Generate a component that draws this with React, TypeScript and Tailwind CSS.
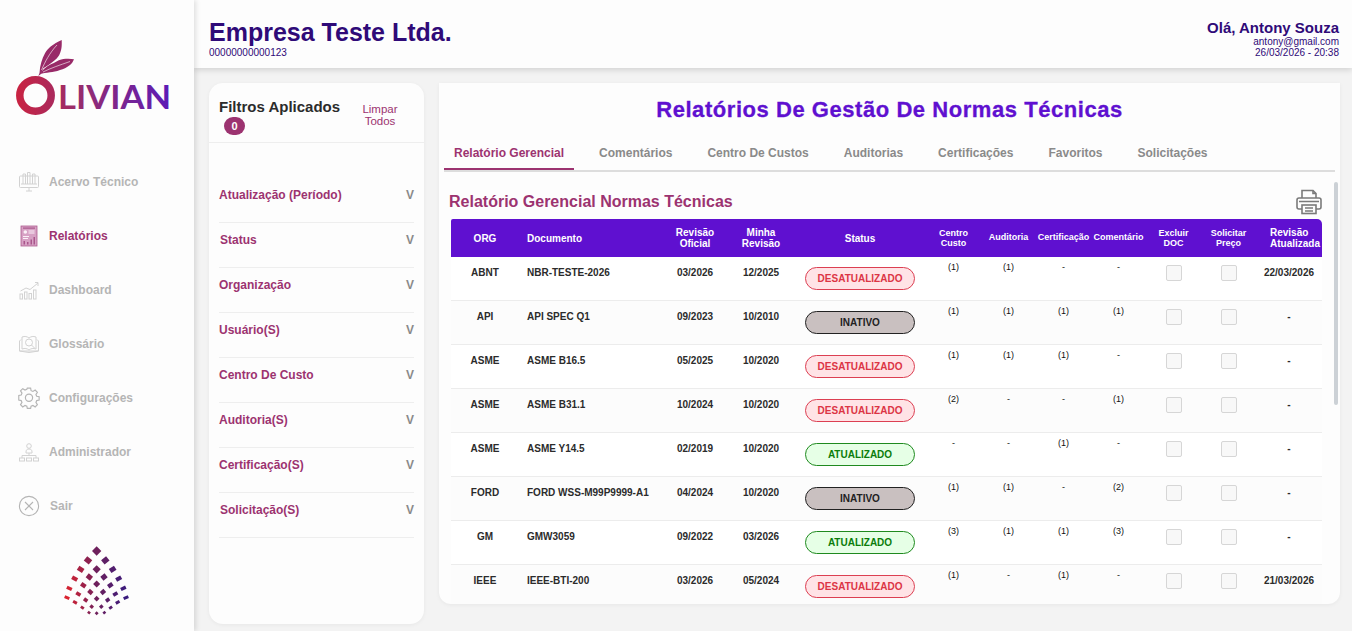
import React from 'react';

type Status = 'des' | 'ina' | 'atu';

interface Row {
  org: string;
  doc: string;
  oficial: string;
  minha: string;
  status: Status;
  centro: string;
  auditoria: string;
  cert: string;
  comentario: string;
  atualizada: string;
}

const rows: Row[] = [
  { org: 'ABNT', doc: 'NBR-TESTE-2026', oficial: '03/2026', minha: '12/2025', status: 'des', centro: '(1)', auditoria: '(1)', cert: '-', comentario: '-', atualizada: '22/03/2026' },
  { org: 'API', doc: 'API SPEC Q1', oficial: '09/2023', minha: '10/2010', status: 'ina', centro: '(1)', auditoria: '(1)', cert: '(1)', comentario: '(1)', atualizada: '-' },
  { org: 'ASME', doc: 'ASME B16.5', oficial: '05/2025', minha: '10/2020', status: 'des', centro: '(1)', auditoria: '(1)', cert: '(1)', comentario: '-', atualizada: '-' },
  { org: 'ASME', doc: 'ASME B31.1', oficial: '10/2024', minha: '10/2020', status: 'des', centro: '(2)', auditoria: '-', cert: '-', comentario: '(1)', atualizada: '-' },
  { org: 'ASME', doc: 'ASME Y14.5', oficial: '02/2019', minha: '10/2020', status: 'atu', centro: '-', auditoria: '-', cert: '(1)', comentario: '-', atualizada: '-' },
  { org: 'FORD', doc: 'FORD WSS-M99P9999-A1', oficial: '04/2024', minha: '10/2020', status: 'ina', centro: '(1)', auditoria: '(1)', cert: '-', comentario: '(2)', atualizada: '-' },
  { org: 'GM', doc: 'GMW3059', oficial: '09/2022', minha: '03/2026', status: 'atu', centro: '(3)', auditoria: '(1)', cert: '(1)', comentario: '(3)', atualizada: '-' },
  { org: 'IEEE', doc: 'IEEE-BTI-200', oficial: '03/2026', minha: '05/2024', status: 'des', centro: '(1)', auditoria: '-', cert: '(1)', comentario: '-', atualizada: '21/03/2026' },
];

const filters = ['Atualização (Período)', 'Status', 'Organização', 'Usuário(S)', 'Centro De Custo', 'Auditoria(S)', 'Certificação(S)', 'Solicitação(S)'];
const tabs = ['Relatório Gerencial', 'Comentários', 'Centro De Custos', 'Auditorias', 'Certificações', 'Favoritos', 'Solicitações'];

const gridCols = 'grid grid-cols-[68px_143px_66px_66px_132px_55px_55px_55px_55px_55px_55px_66px]';

const Logo = () => (
  <svg width="160" height="82" viewBox="0 0 160 82" className="block">
    <defs>
      <linearGradient id="logoGrad" gradientUnits="userSpaceOnUse" x1="0" y1="0" x2="158" y2="0">
        <stop offset="0" stopColor="#cb2340" />
        <stop offset="0.4" stopColor="#982d6c" />
        <stop offset="1" stopColor="#5a1bb8" />
      </linearGradient>
    </defs>
    <circle cx="21.500" cy="57.500" r="15.700" fill="none" stroke="url(#logoGrad)" strokeWidth="7.500" />
    <path d="M24.300 38 25.500 35C26 27 28 21 31 15.300 33.500 10.500 39 6 47.700 2 48 9 47.500 11.500 46 15.300 45 18 43.500 20 41 22 37.500 25 33 28 29.300 30.300L27 36Z" fill="#982a68" />
    <path d="M26 36C30 30 34 27.500 39.300 25.300 43 23 47 21.200 49.300 21 53 20.500 57 20.500 60 21.300 59 24 57.500 25.800 56 27 52.500 29.800 49.500 31 46 32 42.500 33.500 39 34 36 34.300 32 34.800 29 35.500 26 36Z" fill="#982a68" />
    <path d="M27.500 32C31 24 35.500 15 43 7" stroke="#fdfdfd" strokeWidth="0.600" fill="none" />
    <path d="M29 34C37 30 46 27 56 23.500" stroke="#fdfdfd" strokeWidth="0.600" fill="none" />
    <text x="44" y="71.300" fill="url(#logoGrad)" fontFamily="Lato, sans-serif" fontWeight="700" fontSize="32" textLength="113" lengthAdjust="spacingAndGlyphs">LIVIAN</text>
  </svg>
);

// each row of the mark, x/y read off the reference at 3x, s is the side of the little square
const markRows: { y: number[]; x: number[]; s: number }[] = [
  { x: [290], y: [573], s: 6.6 },
  { x: [264, 316], y: [601, 601], s: 6.2 },
  { x: [242, 290, 338], y: [628, 628, 628], s: 5.8 },
  { x: [224, 268, 312, 356], y: [656, 651, 651, 656], s: 5.4 },
  { x: [208, 250, 290, 331, 370], y: [685, 676, 672, 676, 685], s: 5 },
  { x: [201, 235, 271, 309, 346, 378], y: [713, 702, 696, 696, 702, 713], s: 4.6 },
  { x: [225, 257, 290, 323, 353], y: [727, 720, 716, 720, 727], s: 4 },
  { x: [247, 275, 304, 332], y: [743, 740, 740, 743], s: 3.4 },
  { x: [267, 290, 313], y: [758, 760, 758], s: 2.8 },
];

const markColor = (x: number) => {
  const t = (x - 201) / 177;
  const a = t < 0.5 ? [218, 35, 48] : [110, 32, 92];
  const b = t < 0.5 ? [110, 32, 92] : [58, 27, 125];
  const k = t < 0.5 ? t * 2 : (t - 0.5) * 2;
  const c = a.map((v, i) => Math.round(v + (b[i] - v) * k));
  return `rgb(${c[0]},${c[1]},${c[2]})`;
};

const DiamondMark = () => (
  <svg width="66" height="72" viewBox="0 0 66 72" className="block">
    {markRows.flatMap((row, r) =>
      row.x.map((zx, i) => {
        const cx = zx / 3 - 64;
        const cy = row.y[i] / 3 - 185;
        const t = (zx - 290) / 90;
        const abs = Math.abs(t);
        const angle = t < 0 ? 45 - abs * 22 : 135 + abs * 22;
        const w = row.s * (1 + abs * 0.1);
        const h = row.s * (1 - abs * 0.35);
        return (
          <rect
            key={`${r}-${i}`}
            x={cx - w / 2}
            y={cy - h / 2}
            width={w}
            height={h}
            fill={markColor(zx)}
            transform={`rotate(${angle} ${cx} ${cy})`}
          />
        );
      })
    )}
  </svg>
);

const iconProps = { width: 22, height: 22, viewBox: '0 0 22 22', fill: 'none', strokeWidth: 1 };

const AcervoIcon = () => (
  <svg {...iconProps} stroke="#d2d2d2">
    <rect x="1.500" y="5" width="19" height="11.500" rx="1" />
    <path d="M5 13V3h2.500v10M9.500 13V1.500H12V13M14.500 13V3H17v10M3 13h16M8 20h6M11 16.500V20" />
  </svg>
);

const RelatoriosIcon = () => (
  <svg {...iconProps} viewBox="0 0 18 22" width={18} stroke="none">
    <rect x="1" y="1" width="16" height="20" fill="#d7a1c4" stroke="#ad5c90" strokeWidth="0.800" />
    <rect x="3" y="2.500" width="12" height="1.200" fill="#a9568b" />
    <circle cx="5.300" cy="7" r="1.800" fill="#fbf0f7" />
    <path d="M8.500 5.500h6v1h-6zM8.500 7.500h6v1h-6zM3 11h6v1H3zM3 13h5v1H3z" fill="#fbf0f7" />
    <path d="M3.500 16h1.500v3.500H3.500zM7 17h1.500v2.500H7zM10.500 14.500H12v5h-1.500zM13.500 12H15v7.500h-1.500z" fill="#a9568b" />
  </svg>
);

const DashboardIcon = () => (
  <svg {...iconProps} stroke="#d2d2d2">
    <path d="M2.500 12 8 9l4 1.500L20 4" />
    <path d="M17 3.500h3V7" />
    <rect x="2" y="15" width="2.500" height="5" />
    <rect x="6.500" y="13" width="2.500" height="7" />
    <rect x="11" y="14.500" width="2.500" height="5.500" />
    <rect x="15.500" y="11" width="2.500" height="9" />
  </svg>
);

const GlossarioIcon = () => (
  <svg {...iconProps} stroke="#d2d2d2">
    <path d="M3 6.500 1.500 8v10h19V8L19 6.500M1.500 18l9.500 1.500 9.500-1.500" />
    <path d="M4 16V4c3-1 5-.5 7 1 2-1.500 4-2 7-1v12c-3-1-5-.5-7 1-2-1.500-4-2-7-1Z" />
    <circle cx="11" cy="9.500" r="3.500" />
    <path d="M13.500 12l3 3" />
  </svg>
);

const ConfigIcon = () => (
  <svg {...iconProps} stroke="#b5b5b5" strokeWidth="1.200">
    <path d="M9.300 1.500h3.400l.5 2.700 1.900.8 2.300-1.500 2.300 2.300-1.500 2.300.8 1.900 2.500.5v3.400l-2.500.5-.8 1.900 1.500 2.300-2.300 2.300-2.300-1.500-1.900.8-.5 2.200H9.300l-.5-2.200-1.900-.8-2.300 1.500-2.300-2.300 1.500-2.300-.8-1.900-2.500-.5V9.100l2.500-.5.8-1.900-1.500-2.300 2.300-2.300 2.300 1.500 1.900-.8Z" transform="scale(0.97) translate(0.300 -0.400)" />
    <circle cx="11" cy="10.800" r="3.600" />
  </svg>
);

const AdminIcon = () => (
  <svg {...iconProps} stroke="#d2d2d2">
    <circle cx="11" cy="5" r="2.300" />
    <path d="M8 11c0-2 1-3 3-3s3 1 3 3v1H8Z" />
    <path d="M11 12v2.500M4 17v-2.500h14V17" />
    <rect x="1.500" y="17" width="5" height="3" />
    <rect x="8.500" y="17" width="5" height="3" />
    <rect x="15.500" y="17" width="5" height="3" />
  </svg>
);

const SairIcon = () => (
  <svg {...iconProps} stroke="#b5b5b5" strokeWidth="1.100">
    <circle cx="11" cy="11" r="9.600" />
    <path d="m7 7 8 8M15 7l-8 8" />
  </svg>
);

const PrinterIcon = () => (
  <svg width="26" height="26" viewBox="0 0 26 26" fill="none" stroke="#7a7a7a" strokeWidth="1.600" className="block">
    <path d="M6 9V1.500h11l3 3V9" />
    <path d="M17 1.500v3h3" />
    <path d="M6 20H3a2 2 0 0 1-2-2v-7a2 2 0 0 1 2-2h20a2 2 0 0 1 2 2v7a2 2 0 0 1-2 2h-3" />
    <rect x="6" y="16" width="14" height="8.500" />
    <path d="M9 19h8M9 22h8M3 12.500h20" />
  </svg>
);

const nav = [
  { label: 'Acervo Técnico', icon: <AcervoIcon />, active: false },
  { label: 'Relatórios', icon: <RelatoriosIcon />, active: true },
  { label: 'Dashboard', icon: <DashboardIcon />, active: false },
  { label: 'Glossário', icon: <GlossarioIcon />, active: false },
  { label: 'Configurações', icon: <ConfigIcon />, active: false },
  { label: 'Administrador', icon: <AdminIcon />, active: false },
  { label: 'Sair', icon: <SairIcon />, active: false },
];

const Sidebar = () => (
  <aside className="w-[194px] h-[631px] shrink-0 bg-[#fdfdfd] shadow-[2px_0_5px_rgba(0,0,0,0.12)] z-20 flex flex-col">
    <div className="pt-[38px] pl-[14px] h-[155px]">
      <Logo />
    </div>
    <nav className="flex flex-col">
      {nav.map((item) => (
        <div key={item.label} className="h-[54px] flex items-center pl-[18px] gap-[9px]">
          <span className="w-[22px] flex justify-center">{item.icon}</span>
          <span className={`text-[12px] font-bold ${item.active ? 'text-[#9c3370]' : 'text-[#b5b5b5]'} ${item.label === 'Sair' ? 'ml-px' : ''}`}>{item.label}</span>
        </div>
      ))}
    </nav>
    <div className="flex justify-center pt-[12px]">
      <DiamondMark />
    </div>
  </aside>
);

const Header = () => (
  <header className="h-[68px] bg-[#fdfdfd] shadow-[0_2px_6px_rgba(0,0,0,0.14)] z-10 flex justify-between pl-[15px] pr-[13px] text-[#2f0a78]">
    <div className="pt-[18px]">
      <h1 className="text-[25px] leading-[28px] font-bold">Empresa Teste Ltda.</h1>
      <p className="text-[10px] leading-[10px] mt-[2px]">00000000000123</p>
    </div>
    <div className="pt-[20px] text-right">
      <p className="text-[15px] leading-[16px] font-bold">Olá, Antony Souza</p>
      <p className="text-[10px] leading-[11px]">antony@gmail.com</p>
      <p className="text-[10px] leading-[11px]">26/03/2026 - 20:38</p>
    </div>
  </header>
);

const FilterPanel = () => (
  <section className="w-[215px] h-[541px] shrink-0 bg-[#fdfdfd] rounded-[14px] shadow-[0_1px_4px_rgba(0,0,0,0.05)]">
    <div className="h-[60px] border-b border-[#eeeeee] flex pl-[10px]">
      <div className="w-[130px] pt-[15px]">
        <p className="text-[15px] leading-[18px] font-bold text-[#2b2b2b]">Filtros Aplicados</p>
        <span className="ml-[5px] mt-px block w-[21px] h-[18px] rounded-full bg-[#9c3370] text-white text-[11px] leading-[18px] font-bold text-center">0</span>
      </div>
      <p className="w-[62px] pt-[20px] text-[11.500px] leading-[12px] text-center text-[#9c3370]">Limpar Todos</p>
    </div>
    <div className="pt-[35px] pl-[10px] pr-[10px]">
      {filters.map((f) => (
        <div key={f} className="h-[45px] border-b border-[#eeeeee] flex justify-between items-start pt-[10px] text-[12px] font-bold leading-[14px]">
          <span className={`text-[#9c3370] ${f === 'Status' || f === 'Solicitação(S)' ? 'pl-px' : ''}`}>{f}</span>
          <span className="text-[#8a8a8a]">V</span>
        </div>
      ))}
    </div>
  </section>
);

const StatusPill = ({ status }: { status: Status }) => {
  if (status === 'des') {
    return <span className="block w-[110px] h-[23px] mx-auto rounded-full border border-[#dc3f52] bg-[#ffe3e6] text-[#dc3545] text-[10px] leading-[21px] font-bold text-center">DESATUALIZADO</span>;
  }
  if (status === 'ina') {
    return <span className="block w-[110px] h-[23px] mx-auto rounded-full border border-[#222222] bg-[#c9c0c0] text-[#222222] text-[10px] leading-[21px] font-bold text-center">INATIVO</span>;
  }
  return <span className="block w-[110px] h-[23px] mx-auto rounded-full border border-[#1f8a1f] bg-[#e6ffe6] text-[#0b7d0b] text-[10px] leading-[21px] font-bold text-center">ATUALIZADO</span>;
};

const Check = () => <span className="block w-[16px] h-[16px] mx-auto rounded-[2px] border border-[#d6d6d6] bg-[#f8f8f8]" />;

const TableHead = () => (
  <div className={`${gridCols} h-[38px] bg-[#5f10d0] rounded-tr-[5px] rounded-tl-[2px] items-center text-white font-bold text-center`}>
    <span className="text-[10px]">ORG</span>
    <span className="text-[10px] text-left pl-2">Documento</span>
    <span className="text-[10px] leading-[11px]">Revisão<br />Oficial</span>
    <span className="text-[10px] leading-[11px]">Minha<br />Revisão</span>
    <span className="text-[10px]">Status</span>
    <span className="text-[9px] leading-[10px]">Centro<br />Custo</span>
    <span className="text-[9px]">Auditoria</span>
    <span className="text-[9px] whitespace-nowrap">Certificação</span>
    <span className="text-[9px] whitespace-nowrap">Comentário</span>
    <span className="text-[9px] leading-[10px]">Excluir<br />DOC</span>
    <span className="text-[9px] leading-[10px]">Solicitar<br />Preço</span>
    <span className="text-[10px] leading-[11px] whitespace-nowrap pl-[14px] text-left">
      <span className="block">Revisão</span>
      Atualizada
    </span>
  </div>
);

const TableRow = ({ row, odd }: { row: Row; odd: boolean }) => (
  <div className={`${gridCols} h-[44px] border-b border-[#ececec] text-center text-[#2b2b2b] ${odd ? 'bg-white' : 'bg-[#fcfcfc]'}`}>
    <span className="text-[10px] font-bold pt-[10px] leading-[12px]">{row.org}</span>
    <span className="text-[10px] font-bold pt-[10px] leading-[12px] text-left pl-2">{row.doc}</span>
    <span className="text-[10px] font-bold pt-[10px] leading-[12px]">{row.oficial}</span>
    <span className="text-[10px] font-bold pt-[10px] leading-[12px]">{row.minha}</span>
    <span className="pt-[10px]"><StatusPill status={row.status} /></span>
    <span className="text-[9px] pt-[5px] leading-[10px] text-[#111111]">{row.centro}</span>
    <span className="text-[9px] pt-[5px] leading-[10px] text-[#111111]">{row.auditoria}</span>
    <span className="text-[9px] pt-[5px] leading-[10px] text-[#111111]">{row.cert}</span>
    <span className="text-[9px] pt-[5px] leading-[10px] text-[#111111]">{row.comentario}</span>
    <span className="pt-[8px]"><Check /></span>
    <span className="pt-[8px]"><Check /></span>
    <span className="text-[10px] font-bold pt-[10px] leading-[12px]">{row.atualizada}</span>
  </div>
);

const ReportPanel = () => (
  <section className="relative w-[901px] h-[521px] shrink-0 bg-[#fdfdfd] rounded-[0_0_12px_12px] shadow-[0_1px_4px_rgba(0,0,0,0.05)] overflow-hidden">
    <h2 className="pt-[14px] h-[50px] text-center text-[22px] leading-[26px] font-bold text-[#5f10d0] tracking-[0.55px] [-webkit-text-stroke:0.3px_#5f10d0]">Relatórios De Gestão De Normas Técnicas</h2>
    <div className="mx-[5px] mt-[10px] h-[29px] border-b-2 border-[#dddddd] flex text-[12px] font-bold text-[#8a8a8a] leading-[14px]">
      {tabs.map((t, i) => (
        <span key={t} className={`h-[27px] px-[10px] mr-[15px] pt-[3px] ${i === 0 ? 'text-[#9c3370] border-b-2 border-[#9c3370]' : ''}`}>{t}</span>
      ))}
    </div>
    <div className="pt-[17px] pl-[12px]">
      <div className="w-[871px] h-[30px] flex justify-between items-start">
        <p className="-ml-[2px] pt-[4px] text-[16px] leading-[18px] font-bold text-[#9c3370]">Relatório Gerencial Normas Técnicas</p>
        <PrinterIcon />
      </div>
      <div className="w-[871px]">
        <TableHead />
        {rows.map((r, i) => (
          <TableRow key={r.doc} row={r} odd={i % 2 === 0} />
        ))}
      </div>
    </div>
    {/* scrollbar thumb */}
    <div className="absolute right-[2px] top-[99px] w-[4px] h-[223px] rounded-full bg-[#ccd1d6]" />
  </section>
);

export default function App() {
  return (
    <div className="w-[1352px] h-[631px] flex bg-[#f3f3f3] overflow-hidden font-['Liberation_Sans',Arial,sans-serif]">
      <Sidebar />
      <div className="flex-1 flex flex-col">
        <Header />
        <main className="flex gap-[15px] pl-[15px] pt-[15px]">
          <FilterPanel />
          <ReportPanel />
        </main>
      </div>
    </div>
  );
}
